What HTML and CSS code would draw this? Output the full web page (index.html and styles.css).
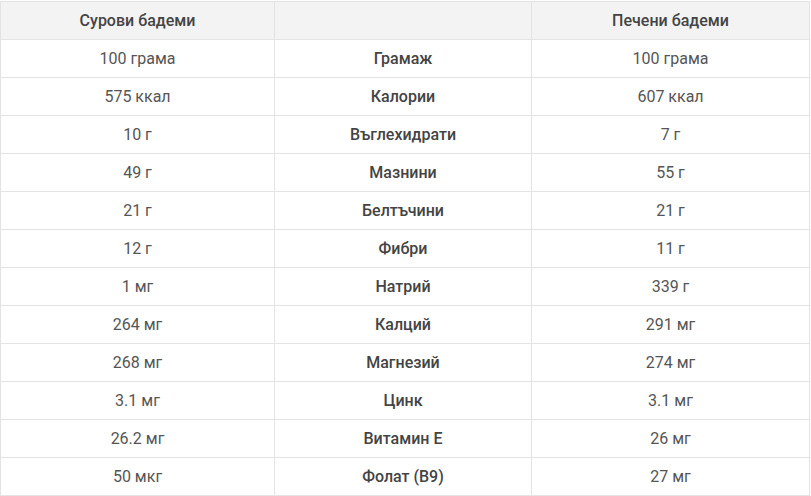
FILE: index.html
```html
<!DOCTYPE html>
<html lang="bg">
<head>
<meta charset="utf-8">
<link rel="stylesheet" href="styles.css">
</head>
<body>
<table class="nutri">
  <colgroup>
    <col class="c1"><col class="c2"><col class="c3">
  </colgroup>
  <thead>
    <tr><th>Сурови бадеми</th><th></th><th>Печени бадеми</th></tr>
  </thead>
  <tbody>
    <tr><td>100 грама</td><td class="lbl">Грамаж</td><td>100 грама</td></tr>
    <tr><td>575 ккал</td><td class="lbl">Калории</td><td>607 ккал</td></tr>
    <tr><td>10 г</td><td class="lbl">Въглехидрати</td><td>7 г</td></tr>
    <tr><td>49 г</td><td class="lbl">Мазнини</td><td>55 г</td></tr>
    <tr><td>21 г</td><td class="lbl">Белтъчини</td><td>21 г</td></tr>
    <tr><td>12 г</td><td class="lbl">Фибри</td><td>11 г</td></tr>
    <tr><td>1 мг</td><td class="lbl">Натрий</td><td>339 г</td></tr>
    <tr><td>264 мг</td><td class="lbl">Калций</td><td>291 мг</td></tr>
    <tr><td>268 мг</td><td class="lbl">Магнезий</td><td>274 мг</td></tr>
    <tr><td>3.1 мг</td><td class="lbl">Цинк</td><td>3.1 мг</td></tr>
    <tr><td>26.2 мг</td><td class="lbl">Витамин Е</td><td>26 мг</td></tr>
    <tr><td>50 мкг</td><td class="lbl">Фолат (B9)</td><td>27 мг</td></tr>
  </tbody>
</table>
</body>
</html>
```
FILE: styles.css
```css
html, body {
  margin: 0;
  padding: 0;
  background: #ffffff;
}
body {
  font-family: Roboto, "Liberation Sans", sans-serif;
  font-size: 16px;
  color: #555555;
}
.nutri {
  width: 809px;
  border-collapse: collapse;
  table-layout: fixed;
  margin-top: 1px;
}
.c1 { width: 274px; }
.c2 { width: 257px; }
.c3 { width: 278px; }
.nutri th,
.nutri td {
  border: 1px solid #e3e3e3;
  height: 38px;
  padding: 0 8px;
  text-align: center;
  vertical-align: middle;
  box-sizing: border-box;
}
.nutri th {
  background: #f3f3f3;
  color: #444444;
  font-weight: 500;
}
.nutri td.lbl {
  font-weight: 500;
  color: #444444;
}
```
